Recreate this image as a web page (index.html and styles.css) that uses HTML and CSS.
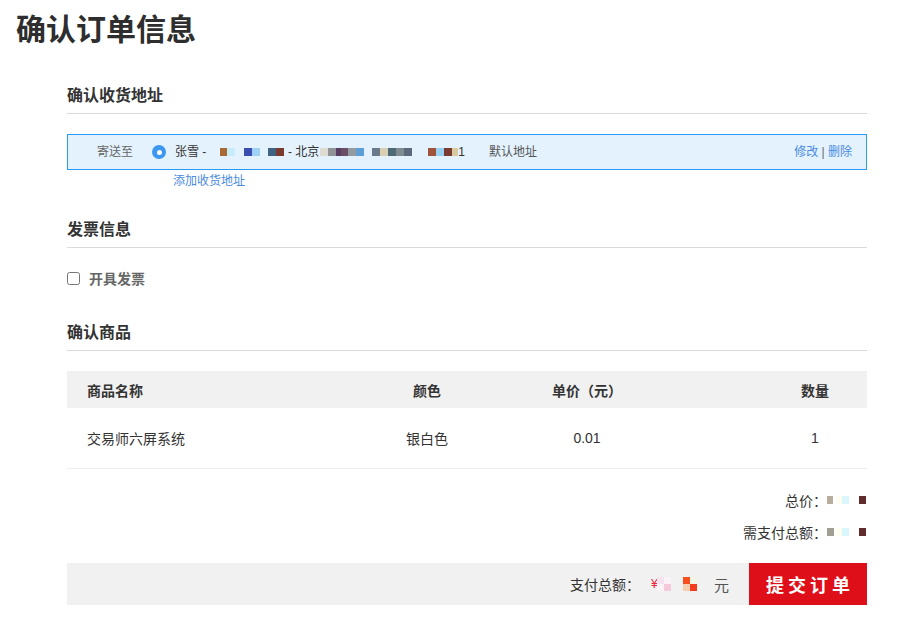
FILE: index.html
```html
<!DOCTYPE html>
<html lang="zh-CN">
<head>
<meta charset="utf-8">
<title>确认订单信息</title>
<link rel="stylesheet" href="styles.css">
</head>
<body>
<h1 class="page-title">确认订单信息</h1>
<main class="order">
  <section class="section section-address">
    <h2 class="section-title">确认收货地址</h2>
    <div class="address">
      <span class="addr-label">寄送至</span>
      <span class="radio"></span>
      <span class="addr-text">
        <span class="addr-name">张雪 -</span>
        <span class="mz mz-a1"></span>
        <span class="mz mz-a2"></span>
        <span class="mz mz-a3"></span>
        <span class="addr-city">- 北京</span>
        <span class="mz mz-a4"></span>
        <span class="mz mz-a5"></span>
        <span class="mz mz-a6"></span>
        <span class="addr-tail">1</span>
      </span>
      <span class="addr-default">默认地址</span>
      <span class="addr-actions"><a class="link">修改</a> <span class="sep">|</span> <a class="link">删除</a></span>
    </div>
    <a class="add-address">添加收货地址</a>
  </section>

  <section class="section section-invoice">
    <h2 class="section-title">发票信息</h2>
    <label class="invoice-option">
      <input type="checkbox" class="check">
      <span class="invoice-label">开具发票</span>
    </label>
  </section>

  <section class="section section-goods">
    <h2 class="section-title">确认商品</h2>
    <div class="goods">
      <div class="goods-row goods-head">
        <div class="cell cell-name">商品名称</div>
        <div class="cell cell-center">颜色</div>
        <div class="cell cell-center">单价（元）</div>
        <div class="cell cell-center cell-qty">数量</div>
      </div>
      <div class="goods-row goods-item">
        <div class="cell cell-name">交易师六屏系统</div>
        <div class="cell cell-center">银白色</div>
        <div class="cell cell-center">0.01</div>
        <div class="cell cell-center cell-qty">1</div>
      </div>
    </div>

    <div class="totals">
      <div class="total-line"><span class="total-label">总价：</span><span class="mz mz-t1"></span></div>
      <div class="total-line"><span class="total-label">需支付总额：</span><span class="mz mz-t2"></span></div>
    </div>

    <div class="pay-bar">
      <div class="pay-sum">
        <span class="pay-label">支付总额：</span>
        <span class="pay-yen">¥</span>
        <span class="mz mz-p1"></span>
        <span class="mz mz-p2"></span>
        <span class="pay-unit">元</span>
      </div>
      <button class="submit" type="button">提交订单</button>
    </div>
  </section>
</main>
</body>
</html>
```

FILE: styles.css
```css
* { box-sizing: border-box; }

body {
  margin: 0;
  font-family: "Liberation Sans", "Noto Sans CJK SC", sans-serif;
  color: #333;
  background: #fff;
}

.page-title {
  margin: 12px 0 0 16px;
  font-size: 30px;
  line-height: 36px;
  font-weight: bold;
  color: #2e2e2e;
}

.order {
  width: 800px;
  margin: 36px 0 0 67px;
}

.section-title {
  margin: 0;
  font-size: 16px;
  line-height: 24px;
  font-weight: bold;
  color: #333;
  padding-bottom: 5px;
  border-bottom: 1px solid #dadada;
}

/* address */
.address {
  margin-top: 20px;
  display: flex;
  align-items: center;
  height: 36px;
  border: 1px solid #2a9af2;
  background: #e3f2fd;
  padding: 0 14px 0 29px;
  font-size: 12px;
  line-height: 34px;
}

.addr-label { color: #666; }

.radio {
  position: relative;
  width: 14px;
  height: 14px;
  margin-left: 19px;
  border-radius: 50%;
  background: #3b97ef;
}
.radio::after {
  content: "";
  position: absolute;
  left: 4.5px;
  top: 4.5px;
  width: 5px;
  height: 5px;
  border-radius: 50%;
  background: #fff;
}

.addr-text {
  display: flex;
  align-items: center;
  margin-left: 9px;
  color: #333;
}

.mz { display: inline-block; height: 8px; flex: none; }

.addr-name { width: 45px; white-space: pre; }
.addr-city { margin-left: 4px; white-space: pre; }

.mz-a1 { width: 15px; background: linear-gradient(to right, #a86a35 50%, #c6edf9 50%); }
.mz-a2 { width: 16px; margin-left: 9px; background: linear-gradient(to right, #3a4db0 50%, #9fd1f5 50%); }
.mz-a3 { width: 16px; margin-left: 8px; background: linear-gradient(to right, #3e6482 50%, #7b3a2e 50%); }
.mz-a4 {
  width: 44px;
  margin-left: 1px;
  background: linear-gradient(to right,
    #dedbd0 0 8px, #8f9496 8px 16px, #5a3d62 16px 21px,
    #6b4d66 21px 28px, #939ba0 28px 36px, #5f9dd6 36px 44px);
}
.mz-a5 {
  width: 40px;
  margin-left: 8px;
  background: linear-gradient(to right,
    #6b7a8a 0 8px, #d8d0b0 8px 16px, #4f6a77 16px 24px,
    #808c90 24px 32px, #5a6a7a 32px 40px);
}
.mz-a6 {
  width: 30px;
  margin-left: 16px;
  background: linear-gradient(to right,
    #a0523a 0 8px, #9ad0f0 8px 16px, #7a3b30 16px 24px, #d8caa0 24px 30px);
}

.addr-default {
  margin-left: 24px;
  color: #555;
}

.addr-actions {
  margin-left: auto;
  color: #555;
}
.link { color: #4a8be0; cursor: pointer; }
.sep { color: #666; }

.add-address {
  display: block;
  margin-left: 106px;
  font-size: 12px;
  line-height: 22px;
  color: #4a8be0;
  cursor: pointer;
}

/* invoice */
.section-invoice { margin-top: 26px; }

.invoice-option {
  display: flex;
  align-items: center;
  margin-top: 20px;
  height: 20px;
}
.check {
  width: 13px;
  height: 13px;
  margin: 0;
}
.invoice-label {
  margin-left: 9px;
  font-size: 14px;
  font-weight: bold;
  color: #666;
}

/* goods */
.section-goods { margin-top: 33px; }

.goods { margin-top: 20px; }

.goods-row {
  display: grid;
  grid-template-columns: 280px 160px 160px 96px 104px;
  align-items: center;
  font-size: 14px;
}
.goods-head {
  height: 37px;
  background: #f1f1f1;
  font-weight: bold;
  color: #333;
}
.goods-item {
  height: 61px;
  border-bottom: 1px solid #eeeeee;
  color: #333;
}
.cell-name { padding-left: 20px; }
.cell-center { text-align: center; }
.cell-qty { grid-column: 5; }

.totals {
  margin-top: 15px;
  font-size: 14px;
}
.total-line {
  display: flex;
  justify-content: flex-end;
  align-items: center;
  height: 32px;
}
.total-label { color: #333; }

.mz-t1 {
  width: 40px;
  background: linear-gradient(to right,
    #b9ae9c 0 6px, transparent 6px 9px, #fffcf0 9px 15px, #d8f6fb 15px 22px,
    transparent 22px 32px, #5e2c2c 32px 39px, transparent 39px);
}
.mz-t2 {
  width: 40px;
  background: linear-gradient(to right,
    #a19f92 0 7px, transparent 7px 9px, #fffcf0 9px 15px, #d8f6fb 15px 22px,
    transparent 22px 32px, #5e2c2c 32px 39px, transparent 39px);
}

/* pay bar */
.pay-bar {
  margin-top: 15px;
  display: flex;
  justify-content: flex-end;
  align-items: center;
  height: 42px;
  background: #f1f1f1;
}
.pay-sum {
  display: flex;
  align-items: center;
  margin-right: 20px;
}
.pay-label { font-size: 14px; color: #333; }
.pay-yen {
  margin-left: 11px;
  font-size: 12px;
  color: #f0243a;
  width: 6px;
  overflow: hidden;
}
.mz-p1 {
  width: 14px;
  height: 14px;
  background:
    linear-gradient(to right, #f5e4ef 50%, #f9f2f6 50%) top / 100% 50% no-repeat,
    linear-gradient(to right, #fbf3f6 50%, #f6c9da 50%) bottom / 100% 50% no-repeat;
}
.mz-p2 {
  width: 14px;
  height: 14px;
  margin-left: 12px;
  background:
    linear-gradient(to right, #f74f1e 50%, #f2f4e4 50%) top / 100% 50% no-repeat,
    linear-gradient(to right, #f5d0b0 50%, #f43c1c 50%) bottom / 100% 50% no-repeat;
}
.pay-unit {
  margin-left: 17px;
  font-size: 15px;
  color: #555;
}

.submit {
  width: 118px;
  height: 42px;
  border: 0;
  padding: 0 0 0 4px;
  background: #df0f1a;
  color: #fff;
  font-family: "Liberation Sans", "Noto Sans CJK SC", sans-serif;
  font-size: 18px;
  font-weight: bold;
  letter-spacing: 4px;
  cursor: pointer;
}
```
